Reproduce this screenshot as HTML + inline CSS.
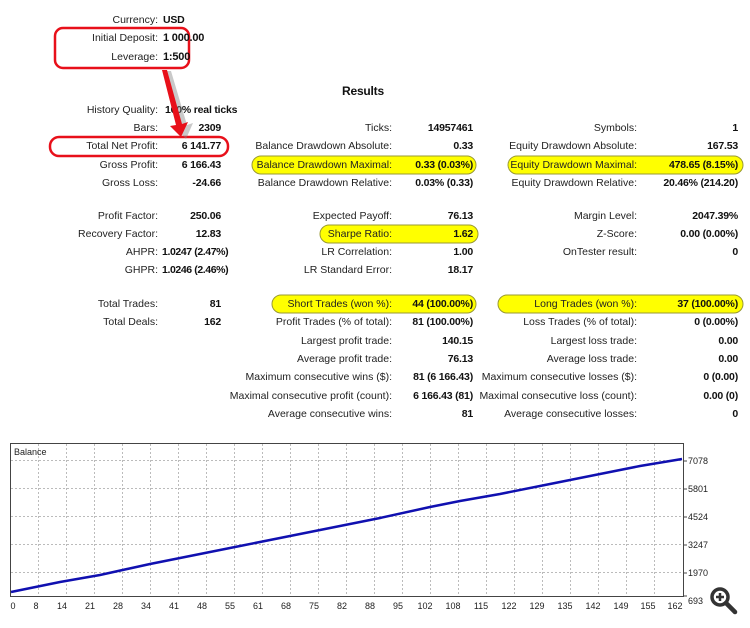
<!DOCTYPE html>
<html><head><meta charset="utf-8"><style>
body{margin:0;width:750px;height:628px;background:#fff;position:relative;overflow:hidden;font-family:"Liberation Sans",Tahoma,sans-serif;font-size:10.5px;color:#222}
.l,.v{position:absolute;white-space:nowrap;line-height:14px}
.l{text-align:right}
.v{font-weight:bold;color:#111;letter-spacing:-0.2px}
.r{text-align:right}
</style></head><body>
<svg width="750" height="628" style="position:absolute;left:0;top:0">
<rect x="320" y="225" width="158" height="18" rx="9" fill="#ffff00" stroke="#999933"/>
<rect x="252" y="156" width="224" height="18" rx="9" fill="#ffff00" stroke="#999933"/>
<rect x="508" y="156" width="235" height="18" rx="9" fill="#ffff00" stroke="#999933"/>
<rect x="272" y="295" width="204" height="18" rx="9" fill="#ffff00" stroke="#999933"/>
<rect x="498" y="295" width="245" height="18" rx="9" fill="#ffff00" stroke="#999933"/>
<rect x="55" y="28" width="134" height="40" rx="8" fill="none" stroke="#e8101a" stroke-width="2.5"/>
<rect x="50" y="137" width="178" height="19" rx="9" fill="none" stroke="#e8101a" stroke-width="2.5"/>
</svg>
<div class="l" style="right:592px;top:13px">Currency:</div><div class="v" style="left:163px;top:13px">USD</div>
<div class="l" style="right:592px;top:31px">Initial Deposit:</div><div class="v" style="left:163px;top:31px;font-size:11px">1 000.00</div>
<div class="l" style="right:592px;top:50px">Leverage:</div><div class="v" style="left:163px;top:50px;font-size:11px">1:500</div>
<div class="v" style="left:342px;top:84px;font-size:12px">Results</div>
<div class="l" style="right:592px;top:103px">History Quality:</div><div class="v" style="left:165px;top:103px">100% real ticks</div>
<div class="l" style="right:592px;top:121px">Bars:</div><div class="v r" style="right:529px;top:121px">2309</div>
<div class="l" style="right:592px;top:139px">Total Net Profit:</div><div class="v r" style="right:529px;top:139px">6 141.77</div>
<div class="l" style="right:592px;top:158px">Gross Profit:</div><div class="v r" style="right:529px;top:158px">6 166.43</div>
<div class="l" style="right:592px;top:176px">Gross Loss:</div><div class="v r" style="right:529px;top:176px">-24.66</div>
<div class="l" style="right:592px;top:209px">Profit Factor:</div><div class="v r" style="right:529px;top:209px">250.06</div>
<div class="l" style="right:592px;top:227px">Recovery Factor:</div><div class="v r" style="right:529px;top:227px">12.83</div>
<div class="l" style="right:592px;top:245px">AHPR:</div><div class="v" style="left:162px;top:245px;letter-spacing:-0.4px">1.0247 (2.47%)</div>
<div class="l" style="right:592px;top:263px">GHPR:</div><div class="v" style="left:162px;top:263px;letter-spacing:-0.4px">1.0246 (2.46%)</div>
<div class="l" style="right:592px;top:297px">Total Trades:</div><div class="v r" style="right:529px;top:297px">81</div>
<div class="l" style="right:592px;top:315px">Total Deals:</div><div class="v r" style="right:529px;top:315px">162</div>

<div class="l" style="right:358px;top:121px">Ticks:</div><div class="v r" style="right:277px;top:121px">14957461</div>
<div class="l" style="right:358px;top:139px">Balance Drawdown Absolute:</div><div class="v r" style="right:277px;top:139px">0.33</div>
<div class="l" style="right:358px;top:158px">Balance Drawdown Maximal:</div><div class="v r" style="right:277px;top:158px">0.33 (0.03%)</div>
<div class="l" style="right:358px;top:176px">Balance Drawdown Relative:</div><div class="v r" style="right:277px;top:176px">0.03% (0.33)</div>
<div class="l" style="right:358px;top:209px">Expected Payoff:</div><div class="v r" style="right:277px;top:209px">76.13</div>
<div class="l" style="right:358px;top:227px">Sharpe Ratio:</div><div class="v r" style="right:277px;top:227px">1.62</div>
<div class="l" style="right:358px;top:245px">LR Correlation:</div><div class="v r" style="right:277px;top:245px">1.00</div>
<div class="l" style="right:358px;top:263px">LR Standard Error:</div><div class="v r" style="right:277px;top:263px">18.17</div>
<div class="l" style="right:358px;top:297px">Short Trades (won %):</div><div class="v r" style="right:277px;top:297px">44 (100.00%)</div>
<div class="l" style="right:358px;top:315px">Profit Trades (% of total):</div><div class="v r" style="right:277px;top:315px">81 (100.00%)</div>
<div class="l" style="right:358px;top:334px">Largest profit trade:</div><div class="v r" style="right:277px;top:334px">140.15</div>
<div class="l" style="right:358px;top:352px">Average profit trade:</div><div class="v r" style="right:277px;top:352px">76.13</div>
<div class="l" style="right:358px;top:370px">Maximum consecutive wins ($):</div><div class="v r" style="right:277px;top:370px">81 (6 166.43)</div>
<div class="l" style="right:358px;top:389px">Maximal consecutive profit (count):</div><div class="v r" style="right:277px;top:389px">6 166.43 (81)</div>
<div class="l" style="right:358px;top:407px">Average consecutive wins:</div><div class="v r" style="right:277px;top:407px">81</div>

<div class="l" style="right:113px;top:121px">Symbols:</div><div class="v r" style="right:12px;top:121px">1</div>
<div class="l" style="right:113px;top:139px">Equity Drawdown Absolute:</div><div class="v r" style="right:12px;top:139px">167.53</div>
<div class="l" style="right:113px;top:158px">Equity Drawdown Maximal:</div><div class="v r" style="right:12px;top:158px">478.65 (8.15%)</div>
<div class="l" style="right:113px;top:176px">Equity Drawdown Relative:</div><div class="v r" style="right:12px;top:176px">20.46% (214.20)</div>
<div class="l" style="right:113px;top:209px">Margin Level:</div><div class="v r" style="right:12px;top:209px">2047.39%</div>
<div class="l" style="right:113px;top:227px">Z-Score:</div><div class="v r" style="right:12px;top:227px">0.00 (0.00%)</div>
<div class="l" style="right:113px;top:245px">OnTester result:</div><div class="v r" style="right:12px;top:245px">0</div>
<div class="l" style="right:113px;top:297px">Long Trades (won %):</div><div class="v r" style="right:12px;top:297px">37 (100.00%)</div>
<div class="l" style="right:113px;top:315px">Loss Trades (% of total):</div><div class="v r" style="right:12px;top:315px">0 (0.00%)</div>
<div class="l" style="right:113px;top:334px">Largest loss trade:</div><div class="v r" style="right:12px;top:334px">0.00</div>
<div class="l" style="right:113px;top:352px">Average loss trade:</div><div class="v r" style="right:12px;top:352px">0.00</div>
<div class="l" style="right:113px;top:370px">Maximum consecutive losses ($):</div><div class="v r" style="right:12px;top:370px">0 (0.00)</div>
<div class="l" style="right:113px;top:389px">Maximal consecutive loss (count):</div><div class="v r" style="right:12px;top:389px">0.00 (0)</div>
<div class="l" style="right:113px;top:407px">Average consecutive losses:</div><div class="v r" style="right:12px;top:407px">0</div>

<svg width="750" height="628" style="position:absolute;left:0;top:0" font-family="Liberation Sans, Tahoma, sans-serif" font-size="9">
<polygon points="162,70 168,70 184,124 190,122 183,138 172,126 178,125" fill="#888" opacity="0.45" transform="translate(3,1)"/>
<polygon points="162,70 167,70 182,124 188,122 181,137 170,126 176,125" fill="#e8101a"/>
<g stroke="#bbb" stroke-dasharray="2,2" stroke-width="1">
<line x1="38.5" y1="444" x2="38.5" y2="596"/><line x1="66.5" y1="444" x2="66.5" y2="596"/><line x1="94.5" y1="444" x2="94.5" y2="596"/><line x1="122.5" y1="444" x2="122.5" y2="596"/><line x1="150.5" y1="444" x2="150.5" y2="596"/><line x1="178.5" y1="444" x2="178.5" y2="596"/><line x1="206.5" y1="444" x2="206.5" y2="596"/><line x1="234.5" y1="444" x2="234.5" y2="596"/><line x1="262.5" y1="444" x2="262.5" y2="596"/><line x1="290.5" y1="444" x2="290.5" y2="596"/><line x1="318.5" y1="444" x2="318.5" y2="596"/><line x1="346.5" y1="444" x2="346.5" y2="596"/><line x1="374.5" y1="444" x2="374.5" y2="596"/><line x1="402.5" y1="444" x2="402.5" y2="596"/><line x1="430.5" y1="444" x2="430.5" y2="596"/><line x1="458.5" y1="444" x2="458.5" y2="596"/><line x1="486.5" y1="444" x2="486.5" y2="596"/><line x1="514.5" y1="444" x2="514.5" y2="596"/><line x1="542.5" y1="444" x2="542.5" y2="596"/><line x1="570.5" y1="444" x2="570.5" y2="596"/><line x1="598.5" y1="444" x2="598.5" y2="596"/><line x1="626.5" y1="444" x2="626.5" y2="596"/><line x1="654.5" y1="444" x2="654.5" y2="596"/>
<line x1="11" y1="460.5" x2="683" y2="460.5"/><line x1="11" y1="488.5" x2="683" y2="488.5"/><line x1="11" y1="516.5" x2="683" y2="516.5"/><line x1="11" y1="544.5" x2="683" y2="544.5"/><line x1="11" y1="572.5" x2="683" y2="572.5"/>
</g>
<rect x="10.5" y="443.5" width="673" height="153" fill="none" stroke="#444"/>
<g stroke="#444"><line x1="684" y1="461" x2="687" y2="461"/><line x1="684" y1="489" x2="687" y2="489"/><line x1="684" y1="517" x2="687" y2="517"/><line x1="684" y1="545" x2="687" y2="545"/><line x1="684" y1="573" x2="687" y2="573"/><line x1="684" y1="596" x2="687" y2="596"/></g>
<polyline points="11,592 60,582 100,575 150,564 200,554 240,546 290,536 320,530 380,518 430,507 460,501 500,494 550,484 600,474 640,466 682,459" fill="none" stroke="#1010b0" stroke-width="2.5"/>
<text x="14" y="455" fill="#222">Balance</text>
<g fill="#222"><text x="688" y="464">7078</text><text x="688" y="492">5801</text><text x="688" y="520">4524</text><text x="688" y="548">3247</text><text x="688" y="576">1970</text><text x="688" y="604">693</text></g>
<g fill="#222" text-anchor="middle"><text x="13" y="609">0</text><text x="36" y="609">8</text><text x="62" y="609">14</text><text x="90" y="609">21</text><text x="118" y="609">28</text><text x="146" y="609">34</text><text x="174" y="609">41</text><text x="202" y="609">48</text><text x="230" y="609">55</text><text x="258" y="609">61</text><text x="286" y="609">68</text><text x="314" y="609">75</text><text x="342" y="609">82</text><text x="370" y="609">88</text><text x="398" y="609">95</text><text x="425" y="609">102</text><text x="453" y="609">108</text><text x="481" y="609">115</text><text x="509" y="609">122</text><text x="537" y="609">129</text><text x="565" y="609">135</text><text x="593" y="609">142</text><text x="621" y="609">149</text><text x="648" y="609">155</text><text x="675" y="609">162</text></g>
<circle cx="720" cy="597" r="8" fill="none" stroke="#333" stroke-width="3.5"/>
<line x1="726" y1="603" x2="735" y2="612" stroke="#333" stroke-width="4.5" stroke-linecap="round"/>
<path d="M716 597h8M720 593v8" stroke="#333" stroke-width="2.5"/>
</svg>
</body></html>
